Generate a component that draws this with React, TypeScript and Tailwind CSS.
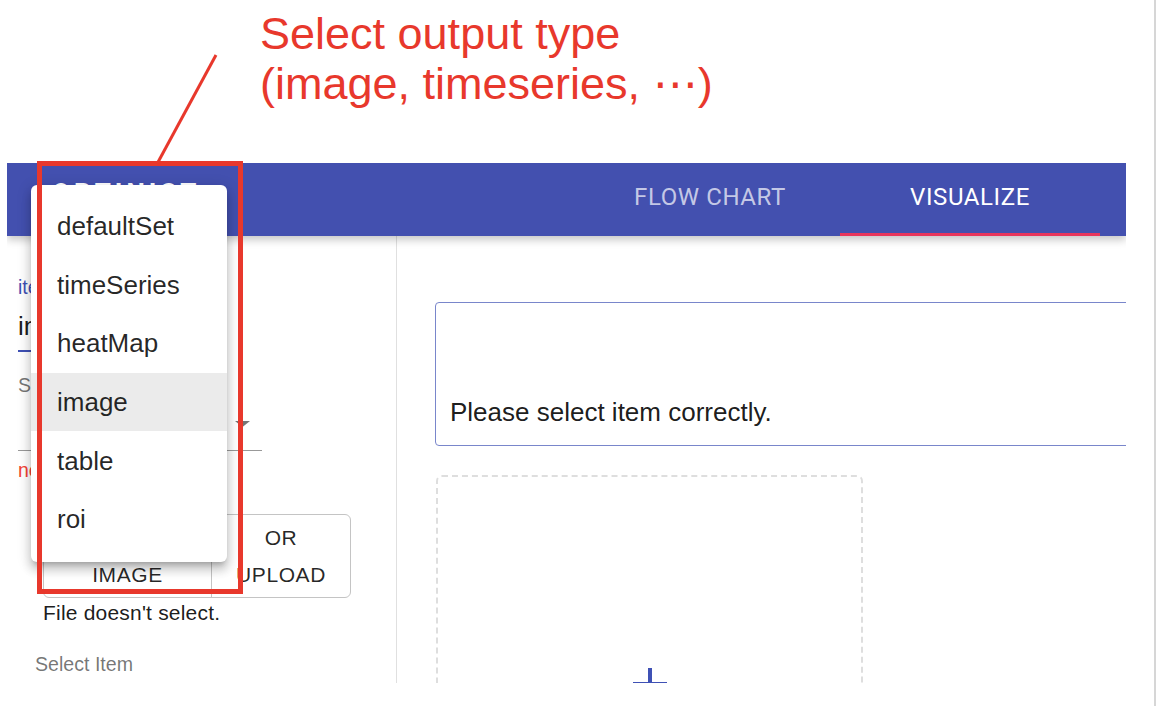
import React from "react";

const menuItems = ["defaultSet", "timeSeries", "heatMap", "image", "table", "roi"];

export default function App() {
  return (
    <div
      className="relative flex h-[706px] w-[1156px] overflow-hidden bg-white"
      style={{ fontFamily: '"Liberation Sans", Arial, sans-serif' }}
    >
      <div className="w-[1154px] shrink-0 pl-[7px] pt-[163px]">
        {/* App frame */}
        <div className="flex h-[520px] w-[1119px] flex-col overflow-hidden">
          {/* Header */}
          <div className="relative z-10 flex h-[73px] shrink-0 bg-[#4350af] shadow-[0_4px_8px_rgba(0,0,0,0.22)]">
            <div
              className="ml-[45px] mt-[17px] self-start text-[26px] font-bold leading-[26px] tracking-[4px] text-white"
              style={{ fontFamily: "Roboto, sans-serif" }}
            >
              OPTINIST
            </div>
            <div
              className="ml-auto flex pr-[26px] text-[24px] font-normal tracking-[0.6px]"
              style={{ fontFamily: "Roboto, sans-serif" }}
            >
              <div className="flex h-[73px] w-[260px] items-center justify-center pb-[5px] text-white/70">
                FLOW CHART
              </div>
              <div className="relative flex h-[73px] w-[260px] items-center justify-center pb-[5px] text-white">
                VISUALIZE
                <div className="absolute bottom-0 left-0 h-[3px] w-full bg-[#e8365d]" />
              </div>
            </div>
          </div>

          {/* Body */}
          <div className="flex min-h-0 flex-1">
            {/* Left panel */}
            <div className="w-[390px] shrink-0 border-r border-[#e0e0e0]">
              <div className="ml-[11px] mt-[41px] h-[20px] text-[19.5px] leading-[20px] text-[#3f51b5]">
                item
              </div>
              <div className="ml-[11px] mt-[16px] h-[26px] text-[26px] leading-[26px] text-black/90">
                image
              </div>
              <div className="ml-[11px] mt-[11px] h-[2px] w-[180px] bg-[#3f51b5]" />
              <div className="ml-[11px] mt-[23px] h-[20px] text-[19.5px] leading-[20px] text-black/55">
                Select output type
              </div>
              <div className="ml-[11px] flex h-[56px] w-[244px] items-end justify-end border-b border-black/40 pb-[23px] pr-[12px]">
                <svg width="15" height="6" viewBox="0 0 15 6">
                  <polygon points="0,0 15,0 7.5,6" fill="#757575" />
                </svg>
              </div>
              <div className="ml-[11px] mt-[9px] h-[20px] text-[19.5px] leading-[20px] text-[#f44336]">
                need to select image
              </div>
              <div className="ml-[36px] mt-[34px] flex h-[84px] w-[308px] rounded-[6px] border border-[#c4c4c4] text-[21px] leading-[37px] tracking-[0.6px] text-black/85">
                <div className="flex w-[168px] flex-col items-center justify-center border-r border-[#c4c4c4]">
                  <span>SELECT</span>
                  <span>IMAGE</span>
                </div>
                <div className="flex flex-1 flex-col items-center justify-center">
                  <span>OR</span>
                  <span>UPLOAD</span>
                </div>
              </div>
              <div className="ml-[36px] mt-[3px] h-[24px] text-[21px] leading-[24px] tracking-[0.2px] text-black/90">
                File doesn't select.
              </div>
              <div className="ml-[28px] mt-[29px] h-[20px] text-[19.6px] leading-[20px] text-black/55">
                Select Item
              </div>
            </div>

            {/* Right panel */}
            <div className="min-w-0 flex-1 overflow-hidden">
              <div className="ml-[38px] mt-[66px] flex h-[144px] w-[720px] shrink-0 flex-col justify-end rounded-[4px] border-[1.5px] border-[#7986cb] pb-[20px] pl-[14px] text-[26px] leading-[26px] text-black/90">
                Please select item correctly.
              </div>
              <div className="ml-[39px] mt-[29px] flex h-[300px] w-[427px] justify-center rounded-[6px] border-2 border-dashed border-[#dedede] pt-[191px]">
                <svg width="34" height="34" viewBox="0 0 34 34">
                  <line x1="17" y1="0" x2="17" y2="34" stroke="#3f51b5" strokeWidth="4" />
                  <line x1="0" y1="16" x2="34" y2="16" stroke="#3f51b5" strokeWidth="4" />
                </svg>
              </div>
            </div>
          </div>
        </div>
      </div>
      <div className="w-[2px] shrink-0 bg-[#d6d6d6]" />

      {/* Dropdown menu overlay */}
      <div className="absolute left-[31px] top-[185px] z-20 w-[196px] rounded-[6px] bg-white pb-[13px] pt-[12px] shadow-[0_5px_5px_-3px_rgba(0,0,0,0.2),0_8px_10px_1px_rgba(0,0,0,0.14),0_3px_14px_2px_rgba(0,0,0,0.12)]">
        {menuItems.map((item) => (
          <div
            key={item}
            className={
              item === "image"
                ? "flex h-[58.6px] items-center bg-[#ebebeb] pl-[26px] text-[26px] leading-[26px] text-black/85"
                : "flex h-[58.6px] items-center pl-[26px] text-[26px] leading-[26px] text-black/85"
            }
          >
            {item}
          </div>
        ))}
      </div>

      {/* Annotation */}
      <div className="pointer-events-none absolute left-[37px] top-[161px] z-30 h-[433px] w-[206px] border-[5px] border-[#e8382c]" />
      <svg className="pointer-events-none absolute left-0 top-0 z-30" width="300" height="170">
        <line x1="216" y1="55" x2="157" y2="164" stroke="#e8382c" strokeWidth="3" />
      </svg>
      <div
        className="pointer-events-none absolute left-[260px] top-[9px] z-30 text-[45px] leading-[50px] text-[#e8382c]"
        style={{ fontFamily: '"Liberation Sans", "Noto Sans CJK JP", sans-serif' }}
      >
        <div>Select output type</div>
        <div>
          (image, timeseries,{" "}
          <span style={{ fontFamily: '"DejaVu Sans", sans-serif' }}>⋯</span>)
        </div>
      </div>
    </div>
  );
}
